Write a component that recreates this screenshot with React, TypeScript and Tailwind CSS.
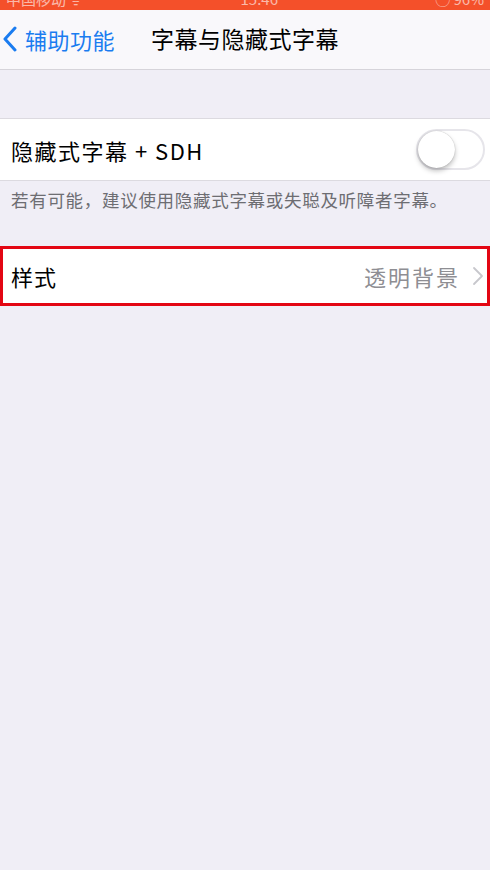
import React from "react";

export default function App() {
  const font = { fontFamily: '"Noto Sans CJK SC", "Noto Sans", sans-serif' };
  return (
    <div className="w-[490px] h-[870px] bg-[#f0eef6] flex flex-col overflow-hidden" style={font}>
      {/* status bar (cut off) */}
      <div className="h-[10px] bg-[#f4502a] overflow-hidden relative shrink-0">
        <div className="flex items-end justify-between px-[6px] -mt-[14px] h-[20px] text-white text-[15px] leading-none opacity-60">
          <span>中国移动 ᯤ</span>
          <span>15:46</span>
          <span>◯ 96%</span>
        </div>
      </div>
      {/* nav bar */}
      <div className="h-[60px] bg-[#f9f8fb] border-b border-[#d6d4da] flex items-center relative shrink-0">
        <div className="flex items-center pl-[2px] text-[#1a7cf0] -mt-[2px]">
          <svg width="16" height="26" viewBox="0 0 16 26" fill="none">
            <path d="M13 2 L3 13 L13 24" stroke="#1a7cf0" strokeWidth="3" strokeLinecap="round" strokeLinejoin="round" />
          </svg>
          <span className="ml-[7px] text-[22px] leading-none tracking-[0.5px]">辅助功能</span>
        </div>
        <div className="absolute left-0 right-0 text-center text-[23px] leading-none text-black pointer-events-none -mt-[2px] tracking-[0.5px]">
          字幕与隐藏式字幕
        </div>
      </div>
      <div className="h-[48px] shrink-0" />
      {/* toggle row */}
      <div className="h-[63px] bg-white border-y border-[#dcdae0] flex items-center justify-between pl-[11px] pr-[5px] shrink-0">
        <span className="text-[22px] text-black leading-none tracking-[1.5px]">隐藏式字幕 + SDH</span>
        <div className="w-[69px] h-[41px] rounded-full border-2 border-[#e6e5ea] bg-white relative">
          <div className="absolute left-0 top-0 w-[37px] h-[37px] rounded-full bg-white shadow-[0_3px_5px_rgba(0,0,0,0.25),0_0_1px_rgba(0,0,0,0.3)]" />
        </div>
      </div>
      <div className="pl-[11px] pt-[10px] h-[65px] text-[17.5px] text-[#6d6d72] leading-none tracking-[0.7px] shrink-0">
        若有可能，建议使用隐藏式字幕或失聪及听障者字幕。
      </div>
      {/* style row */}
      <div className="h-[60px] bg-white border-[3px] border-[#e30613] flex items-center justify-between pl-[8px] pr-[3px] shrink-0">
        <span className="text-[22px] text-black leading-none tracking-[1px]">样式</span>
        <div className="flex items-center">
          <span className="text-[22px] text-[#8e8e93] leading-none tracking-[2px]">透明背景</span>
          <svg className="ml-[12px]" width="12" height="20" viewBox="0 0 12 20" fill="none">
            <path d="M2 2 L10 10 L2 18" stroke="#c7c7cc" strokeWidth="1.8" strokeLinecap="round" strokeLinejoin="round" />
          </svg>
        </div>
      </div>
      <div className="flex-1" />
    </div>
  );
}
